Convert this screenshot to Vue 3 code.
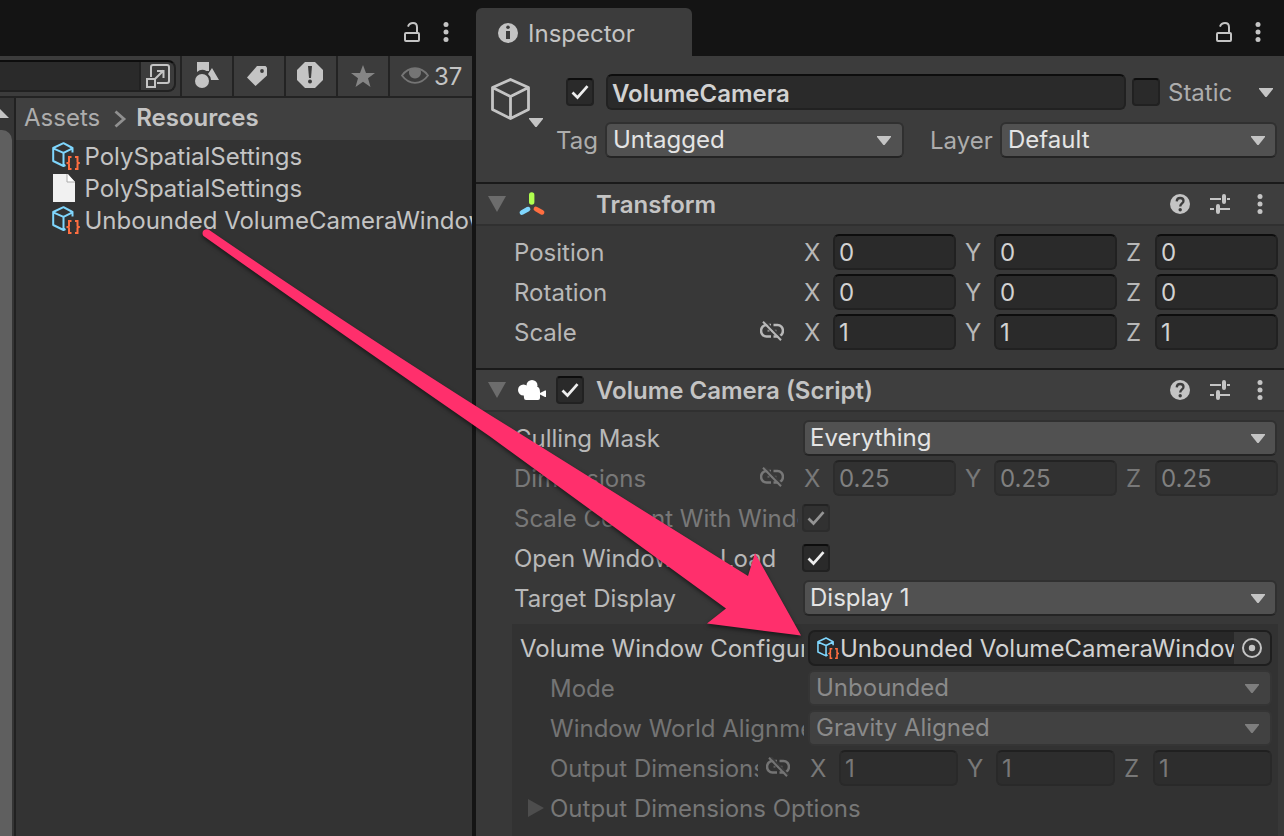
<template>
  <div class="editor">
    <!-- shared icons -->
    <svg class="sprite" width="0" height="0">
      <symbol id="i-lock" viewBox="0 0 16 20">
        <rect x="1" y="11" width="14" height="8" rx="1" fill="none" stroke="currentColor" stroke-width="2" />
        <path d="M4 4.600C5 2 7 1.100 9 1.100c2.600 0 4 1.700 4 4.200V11" fill="none" stroke="currentColor" stroke-width="2" />
      </symbol>
      <symbol id="i-dots" viewBox="0 0 6 20">
        <circle cx="3" cy="2.600" r="2.500" fill="currentColor" />
        <circle cx="3" cy="10" r="2.500" fill="currentColor" />
        <circle cx="3" cy="17.400" r="2.500" fill="currentColor" />
      </symbol>
      <symbol id="i-down" viewBox="0 0 14 9">
        <path d="M0 0h14v1L7.600 9H6.400L0 1z" fill="currentColor" />
      </symbol>
      <symbol id="i-check" viewBox="0 0 18 15">
        <path d="M1.500 7.500l5 5L16.500 1.200" fill="none" stroke="currentColor" stroke-width="2.700" />
      </symbol>
      <symbol id="i-unlink" viewBox="0 0 24 20">
        <path d="M11 4H6.500a5.400 5.700 0 0 0 0 11.500H11M13.500 4h4a5.400 5.700 0 0 1 0 11.500h-4" fill="none" stroke="currentColor" stroke-width="2.500" />
        <path d="M7.500 9.800h9" stroke="currentColor" stroke-width="2" stroke-dasharray="2 1.500" opacity=".65" />
        <path d="M4.600-.4L22.400 18" class="cut" stroke-width="1.800" />
        <path d="M3 .8L21 19.200" stroke="currentColor" stroke-width="2" />
      </symbol>
      <symbol id="i-help" viewBox="0 0 20 20">
        <circle cx="10" cy="10" r="10" fill="currentColor" />
        <path d="M6.700 7.300C6.900 5 8.300 4 10.100 4c2 0 3.400 1.100 3.400 2.900 0 2.400-3.300 2.600-3.300 5.500" class="cut" fill="none" stroke-width="2.300" />
        <circle cx="10.200" cy="15.700" r="1.700" class="hole" />
      </symbol>
      <symbol id="i-preset" viewBox="0 0 20 20">
        <path d="M0 5h11M17 5h3M0 15h4M10 15h10" stroke="currentColor" stroke-width="2" />
        <path d="M14 2v6M8 12v6" stroke="currentColor" stroke-width="4" stroke-linecap="round" />
      </symbol>
      <symbol id="i-asset" viewBox="0 0 28 28">
        <path d="M20.500 10.500V6L11.500 1.200 1.200 6v13l10.300 5 2-1M1.200 6.300l10.300 4.500 9-4.500M11.500 10.800V23.500" fill="none" stroke="#7fd6fd" stroke-width="2" stroke-linejoin="round" />
        <path d="M19.500 15H17v5l-1.500 1L17 22v5h2.500M23 15h2.500v5l1.500 1-1.500 1v5H23" fill="none" stroke="#ff6e40" stroke-width="2" />
      </symbol>
      <symbol id="i-fold" viewBox="0 0 18 16">
        <path d="M0 0h18L9 16z" fill="currentColor" />
      </symbol>
    </svg>

    <section class="project">
      <div class="topbar">
        <svg class="lock"><use href="#i-lock" /></svg>
        <svg class="dots"><use href="#i-dots" /></svg>
      </div>
      <div class="toolbar">
        <div class="search">
          <div class="search-input"></div>
          <div class="search-open">
            <svg width="24" height="24" viewBox="0 0 24 24" fill="none" stroke="currentColor" stroke-width="2">
              <path d="M5 13V3q0-2 2-2h14q2 0 2 2v14q0 2-2 2H11" />
              <rect x="1" y="15" width="8" height="8" />
              <path d="M9 15l8.500-8.500M11 7h6.500v7" />
            </svg>
          </div>
        </div>
        <div class="tool">
          <svg width="26" height="28" viewBox="0 0 26 28" fill="currentColor">
            <path d="M3 1h12v9H12.500A8 8 0 0 0 3 11z" />
            <circle cx="8" cy="20" r="7" />
            <path d="M18 7l7 12h-8q-.5-4-3-6z" />
          </svg>
        </div>
        <div class="tool tag-tool">
          <svg width="20" height="20" viewBox="0 0 20 20">
            <path d="M10 0h8.500L20 1.500V9.500L8.500 20 0 11.500z" fill="currentColor" />
            <circle cx="15" cy="5" r="1.900" class="hole" />
          </svg>
        </div>
        <div class="tool alert">
          <svg width="26" height="26" viewBox="0 0 26 26">
            <path d="M8 0h10l8 8v10l-8 8H8l-8-8V8z" fill="currentColor" />
            <path d="M11 4h4l-1 12h-2z" class="hole" />
            <circle cx="13" cy="19.500" r="2" class="hole" />
          </svg>
        </div>
        <div class="tool dim">
          <svg width="24" height="22" viewBox="0 0 24 22">
            <path d="M12 0l3 8h9l-7 5.200L19.500 22 12 16.700 4.500 22 7 13.200 0 8h9z" fill="currentColor" />
          </svg>
        </div>
        <div class="tool hidden-count">
          <svg width="28" height="18" viewBox="0 0 28 18">
            <path d="M1 8.500C8-1.200 20-1.200 27 8.500 20 18.200 8 18.200 1 8.500z" fill="none" stroke="currentColor" stroke-width="1.800" />
            <path d="M8.500 3Q14-.5 19.500 3a6 6 0 1 1-11 0z" fill="currentColor" />
          </svg>
          <span>37</span>
        </div>
      </div>
      <div class="browser">
        <div class="scroll">
          <svg width="18" height="9" viewBox="0 0 18 9"><path d="M9 0l9 9H0z" fill="currentColor" /></svg>
          <div class="thumb"></div>
        </div>
        <div class="files">
          <div class="crumbs">
            <span>Assets</span>
            <svg width="13" height="18" viewBox="0 0 13 18"><path d="M1.500 1.500L10 9l-8.500 7.500" fill="none" stroke="currentColor" stroke-width="2.800" /></svg>
            <b>Resources</b>
          </div>
          <div v-for="(file, i) in files" :key="i" class="file">
            <svg v-if="file.asset" class="asset"><use href="#i-asset" /></svg>
            <svg v-else class="page" viewBox="0 0 22 28">
              <path d="M0 0h15l7 8v20H0z" fill="#f1f1f1" />
              <path d="M14 0v8h8z" fill="#fff" />
              <path d="M14 0v8h8" fill="none" stroke="#aaa" />
            </svg>
            <span>{{ file.name }}</span>
          </div>
        </div>
      </div>
    </section>

    <section class="inspector">
      <div class="topbar">
        <div class="tab">
          <svg width="20" height="20" viewBox="0 0 20 20">
            <circle cx="10" cy="10" r="10" fill="currentColor" />
            <circle cx="10" cy="4.300" r="1.800" class="hole" />
            <path d="M8 8h4v8H8z" class="hole" />
          </svg>
          <span>Inspector</span>
        </div>
        <svg class="lock"><use href="#i-lock" /></svg>
        <svg class="dots"><use href="#i-dots" /></svg>
      </div>

      <div class="object">
        <div class="object-icon">
          <svg width="40" height="42" viewBox="0 0 40 42" fill="none" stroke="currentColor" stroke-width="2.800" stroke-linejoin="round">
            <path d="M19.500 1.500l18 8v22l-18 9-18-9v-22zM1.500 9.500l18 9 18-9M19.500 18.500v22" />
          </svg>
          <svg class="down"><use href="#i-down" /></svg>
        </div>
        <div class="object-fields">
          <div class="line">
            <div class="check"><svg><use href="#i-check" /></svg></div>
            <div class="input name">VolumeCamera</div>
            <div class="check"></div>
            <span class="static">Static</span>
            <svg class="down"><use href="#i-down" /></svg>
          </div>
          <div class="line second">
            <span class="tag">Tag</span>
            <div class="select tag-select"><span>Untagged</span><svg class="down"><use href="#i-down" /></svg></div>
            <span class="layer">Layer</span>
            <div class="select"><span>Default</span><svg class="down"><use href="#i-down" /></svg></div>
          </div>
        </div>
      </div>

      <div class="component-head">
        <svg class="fold"><use href="#i-fold" /></svg>
        <div class="component-icon">
          <svg width="26" height="24" viewBox="0 0 26 24" fill="none" stroke-linecap="round">
            <path d="M13.700 3v7" stroke="#b0ff4f" stroke-width="5.400" />
            <path d="M4 20.500l6-3.300" stroke="#7fd6fd" stroke-width="4.800" />
            <path d="M18 17l6 3.300" stroke="#ff6e40" stroke-width="4.800" />
          </svg>
        </div>
        <b>Transform</b>
        <svg class="help"><use href="#i-help" /></svg>
        <svg class="help"><use href="#i-preset" /></svg>
        <svg class="dots"><use href="#i-dots" /></svg>
      </div>
      <div class="component-body transform">
        <div v-for="row in transform" :key="row.label" class="row">
          <div class="label"><span>{{ row.label }}</span><svg v-if="row.link" class="unlink"><use href="#i-unlink" /></svg></div>
          <div class="vector">
            <label v-for="axis in axes" :key="axis"><span>{{ axis }}</span><div class="input">{{ row.value }}</div></label>
          </div>
        </div>
      </div>

      <div class="component-head">
        <svg class="fold"><use href="#i-fold" /></svg>
        <div class="component-icon">
          <svg width="28" height="20" viewBox="0 0 28 20" fill="#fff">
            <circle cx="5.500" cy="10" r="5.500" />
            <circle cx="14" cy="5.500" r="5.500" />
            <path d="M5 7h12q5-1 5 5v1l5-2.500h1V17h-1l-5-2.500V18q0 2-2 2H8q-2 0-2-2z" />
          </svg>
        </div>
        <div class="check"><svg><use href="#i-check" /></svg></div>
        <b>Volume Camera (Script)</b>
        <svg class="help"><use href="#i-help" /></svg>
        <svg class="help"><use href="#i-preset" /></svg>
        <svg class="dots"><use href="#i-dots" /></svg>
      </div>
      <div class="component-body camera">
        <div class="row">
          <div class="label"><span>Culling Mask</span></div>
          <div class="select"><span>Everything</span><svg class="down"><use href="#i-down" /></svg></div>
        </div>
        <div class="row off">
          <div class="label"><span>Dimensions</span><svg class="unlink"><use href="#i-unlink" /></svg></div>
          <div class="vector">
            <label v-for="axis in axes" :key="axis"><span>{{ axis }}</span><div class="input">0.25</div></label>
          </div>
        </div>
        <div class="row off">
          <div class="label narrow"><span>Scale Content With Window</span></div>
          <div class="check"><svg><use href="#i-check" /></svg></div>
        </div>
        <div class="row">
          <div class="label"><span>Open Window On Load</span></div>
          <div class="check"><svg><use href="#i-check" /></svg></div>
        </div>
        <div class="row">
          <div class="label"><span>Target Display</span></div>
          <div class="select"><span>Display 1</span><svg class="down"><use href="#i-down" /></svg></div>
        </div>

        <div class="config">
          <div class="row">
            <div class="label top"><span>Volume Window Configuration</span></div>
            <div class="object-field">
              <svg class="asset"><use href="#i-asset" /></svg>
              <span>Unbounded VolumeCameraWindowConfiguration</span>
              <div class="picker">
                <svg width="20" height="20" viewBox="0 0 20 20">
                  <circle cx="10" cy="10" r="9" fill="none" stroke="currentColor" stroke-width="2" />
                  <circle cx="10" cy="10" r="3.200" fill="currentColor" />
                </svg>
              </div>
            </div>
          </div>
          <div v-for="row in modes" :key="row.label" class="row off">
            <div class="label"><span>{{ row.label }}</span></div>
            <div class="select"><span>{{ row.value }}</span><svg class="down"><use href="#i-down" /></svg></div>
          </div>
          <div class="row off">
            <div class="label linked"><span>Output Dimensions</span><svg class="unlink"><use href="#i-unlink" /></svg></div>
            <div class="vector">
              <label v-for="axis in axes" :key="axis"><span>{{ axis }}</span><div class="input">1</div></label>
            </div>
          </div>
          <div class="row off options">
            <svg width="16" height="18" viewBox="0 0 16 18"><path d="M0 0l16 9-16 9z" fill="currentColor" /></svg>
            <span>Output Dimensions Options</span>
          </div>
        </div>
      </div>
    </section>

    <!-- drag arrow from the asset to its slot -->
    <svg class="arrow" width="1284" height="836" viewBox="0 0 1284 836">
      <path d="M208.500 229.500Q355 330 490 415L748 576 755 553 801 635.500 707 623.500 726 608.500 490 436.500Q350 340 203.500 236Q201.500 233 203.500 230.500Q206 228.500 208.500 229.500z" fill="#ff2f6c" />
    </svg>
  </div>
</template>

<script setup>
import { ref } from "vue";

const axes = ["X", "Y", "Z"];

const files = ref([
  { name: "PolySpatialSettings", asset: true },
  { name: "PolySpatialSettings", asset: false },
  { name: "Unbounded VolumeCameraWindowConfiguration", asset: true },
]);

const transform = ref([
  { label: "Position", value: 0 },
  { label: "Rotation", value: 0 },
  { label: "Scale", value: 1, link: true },
]);

const modes = ref([
  { label: "Mode", value: "Unbounded" },
  { label: "Window World Alignment", value: "Gravity Aligned" },
]);
</script>

<style>
body {
  margin: 0;
  background: #141414;
}
</style>

<style scoped>
* {
  box-sizing: border-box;
}

.editor {
  position: relative;
  display: flex;
  gap: 4px;
  width: 1284px;
  height: 836px;
  overflow: hidden;
  background: #141414;
  color: #c4c4c4;
  font: 24px/30px Inter, "Liberation Sans", sans-serif;
  white-space: nowrap;
}

svg {
  display: block;
  flex: none;
  overflow: visible;
}

b {
  font-weight: 600;
}

.sprite,
.arrow {
  position: absolute;
  left: 0;
  top: 0;
}

.arrow {
  filter: drop-shadow(0 2px 2px rgb(0 0 0 / 55%));
}

.cut {
  stroke: #3c3c3c;
}

.hole {
  fill: #3c3c3c;
}

.lock {
  width: 16px;
  height: 20px;
  margin-left: auto;
}

.dots {
  width: 6px;
  height: 20px;
  margin-left: 23px;
}

.down {
  width: 14px;
  height: 9px;
}

.topbar {
  display: flex;
  flex: none;
  align-items: center;
  height: 56px;
  padding-top: 8px;
}

/* project window */
.project {
  display: flex;
  flex-direction: column;
  width: 472px;
  overflow: hidden;
}

.project .topbar {
  padding-right: 23px;
}

.toolbar {
  display: flex;
  flex: none;
  height: 42px;
  background: #3c3c3c;
  border-bottom: 2px solid #232323;
}

.search {
  display: flex;
  width: 176px;
  height: 32px;
  margin: 4px 4px 0 0;
  border: 2px solid #212121;
  border-top-color: #0d0d0d;
  border-left: 0;
  border-radius: 0 8px 8px 0;
}

.search-input {
  width: 141px;
  background: #2a2a2a;
  border-right: 2px solid #212121;
}

.search-open {
  flex: 1;
  padding: 2px 0 0 5px;
}

.tool {
  display: flex;
  align-items: center;
  justify-content: center;
  width: 52px;
  padding-bottom: 2px;
  border-left: 2px solid #232323;
}

.tool.tag-tool {
  padding: 0 4px 0 0;
}

.tool.alert {
  padding-right: 2px;
}

.tool.dim {
  padding-bottom: 1px;
  color: #858585;
}

.tool.hidden-count {
  flex: 1;
  justify-content: flex-start;
  gap: 5px;
  padding-left: 11px;
  padding-bottom: 0;
}

.hidden-count svg {
  color: #757575;
}

.hidden-count span {
  padding-top: 2px;
}

.browser {
  display: flex;
  flex: 1;
  min-height: 0;
}

.scroll {
  flex: none;
  width: 16px;
  overflow: hidden;
  background: #353535;
  border-right: 2px solid #212121;
}

.scroll svg {
  margin: 11px 0 12px -9px;
}

.thumb {
  width: 12px;
  height: 720px;
  background: #5f5f5f;
  border-radius: 0 10px 0 0;
}

.files {
  flex: 1;
  overflow: hidden;
  background: #333;
}

.crumbs {
  display: flex;
  align-items: center;
  height: 42px;
  padding: 0 0 2px 8px;
  background: #404040;
  color: #adadad;
}

.crumbs svg {
  margin: 2px 9px 0 14px;
  color: #909090;
}

.crumbs b {
  color: #c4c4c4;
}

.file {
  display: flex;
  align-items: center;
  height: 32px;
  padding-left: 36px;
}

.file span {
  padding: 2px 0 0 0.5px;
}

.asset {
  width: 28px;
  height: 28px;
  margin-right: 4px;
}

.page {
  width: 22px;
  height: 28px;
  margin: 0 9px 0 1px;
}

/* inspector */
.inspector {
  display: flex;
  flex-direction: column;
  width: 808px;
  background: #383838;
}

.inspector .topbar {
  padding-right: 23px;
  background: #141414;
}

.tab {
  display: flex;
  align-items: center;
  gap: 10px;
  width: 216px;
  height: 48px;
  padding: 2px 0 0 22px;
  background: #3c3c3c;
  border-radius: 6px 6px 0 0;
}

.tab span {
  padding-top: 1px;
}

.input {
  height: 36px;
  padding-left: 5px;
  overflow: hidden;
  background: #2a2a2a;
  border: 2px solid #212121;
  border-top-color: #0d0d0d;
  border-radius: 6px;
  color: #d2d2d2;
  line-height: 34px;
}

.select {
  display: flex;
  align-items: center;
  flex: 1;
  height: 36px;
  padding: 0 10px 0 6px;
  background: #515151;
  border: 2px solid #303030;
  border-bottom-color: #242424;
  border-radius: 6px;
  color: #e4e4e4;
}

.select span {
  flex: 1;
}

.select .down {
  color: #c4c4c4;
}

.check {
  display: flex;
  flex: none;
  align-items: center;
  justify-content: center;
  width: 28px;
  height: 28px;
  background: #2a2a2a;
  border: 2px solid #212121;
  border-top-color: #0d0d0d;
  border-radius: 4px;
  color: #eee;
}

.check svg {
  width: 18px;
  height: 15px;
}

.object {
  display: flex;
  flex: none;
  height: 126px;
  padding: 18px 7px 0 15px;
  background: #3c3c3c;
}

.object-icon {
  width: 52px;
  margin: 4px 0 0 0;
}

.object-icon .down {
  margin: -2px 0 0 38px;
}

.object-fields {
  flex: 1;
}

.line {
  display: flex;
  align-items: center;
  height: 36px;
  padding-left: 23px;
}

.line.second {
  margin-top: 12px;
  padding-left: 14px;
  color: #adadad;
}

.name {
  width: 520px;
  margin: 0 6px 0 12px;
  padding-left: 4px;
  font-weight: 600;
  line-height: 35px;
}

.static {
  flex: 1;
  padding: 2px 0 0 8px;
  color: #adadad;
}

.static + .down {
  margin: 0 4px 0 0;
}

.tag {
  width: 49px;
  padding-top: 2px;
  margin-left: -1px;
}

.tag-select {
  flex: none;
  width: 299px;
  padding-right: 11px;
}

.layer {
  width: 96px;
  padding: 2px 0 0 26px;
}

.component-head {
  display: flex;
  flex: none;
  align-items: center;
  height: 44px;
  padding: 0 21px 0 12px;
  background: #3e3e3e;
  border-top: 2px solid #1a1a1a;
  border-bottom: 2px solid #303030;
}

.fold {
  width: 18px;
  height: 16px;
  color: #6c6c6c;
}

.component-icon {
  width: 50px;
  padding-left: 12px;
}

.component-head .check + b {
  margin-left: 12px;
}

.component-head b {
  flex: 1;
  padding-top: 2px;
}

.component-icon + b {
  margin-left: 40px;
}

.help {
  width: 20px;
  height: 20px;
  margin-left: 20px;
}

.component-head .dots {
  margin-left: 27px;
}

.component-body {
  display: flex;
  flex: none;
  flex-direction: column;
  gap: 4px;
  padding: 8px 6px 18px 38px;
}

.row {
  display: flex;
  align-items: center;
  height: 36px;
}

.label {
  display: flex;
  flex: none;
  align-items: center;
  width: 290px;
  overflow: hidden;
  color: #b8b8b8;
}

.label span {
  flex: 1;
  overflow: hidden;
  padding-top: 2px;
}

.unlink {
  width: 24px;
  height: 20px;
  margin: -3px 20px 0 0;
}

.vector {
  display: grid;
  flex: 1;
  grid-template-columns: repeat(3, 1fr);
  gap: 9px;
}

.vector label {
  display: flex;
  align-items: center;
}

.vector label > span {
  width: 29px;
  padding-top: 2px;
  color: #b8b8b8;
}

.vector .input {
  flex: 1;
  padding-left: 4px;
}

.camera {
  flex: 1;
  padding: 8px 6px 0 38px;
}

.camera > .row > .check {
  margin-left: -2px;
}

.camera > .row > .select {
  margin-left: -1px;
  margin-right: 1px;
  padding-left: 5px;
}

.label.narrow {
  width: 284px;
}

.camera > .row > .label.narrow + .check {
  margin-left: 4px;
}

.off {
  color: #777;
}

.off .label,
.off .vector label > span {
  color: #787878;
}

.off .input {
  background: #313131;
  border-color: #2c2c2c;
  border-top-color: #232323;
  color: #808080;
}

.off .check {
  background: #313131;
  border-color: #2c2c2c;
  border-top-color: #232323;
  color: #949494;
}

.config {
  display: flex;
  flex: 1;
  flex-direction: column;
  gap: 4px;
  margin: 4px 0 0 -2px;
  padding: 6px 6px 0 38px;
  background: #323232;
}

.config .label {
  width: 254px;
  margin-right: 4px;
}

.config .label.top {
  width: 284px;
  margin-left: -30px;
  color: #c4c4c4;
}

.config .off .label {
  color: #747474;
}

.config .label.linked {
  width: 240px;
  margin-right: 20px;
}

.linked .unlink {
  margin: -3px 0 0 8px;
}

.config .off .input {
  background: #2d2d2d;
  border-color: #292929;
  border-top-color: #202020;
  color: #787878;
}

.off .select {
  padding-right: 11px;
  background: #414141;
  border-color: #353535;
  color: #8a8a8a;
}

.off .select .down {
  color: #7e7e7e;
}

.object-field {
  display: flex;
  flex: 1;
  align-items: center;
  height: 36px;
  padding-left: 7px;
  overflow: hidden;
  background: #282828;
  border: 2px solid #1e1e1e;
  border-radius: 7px;
  color: #d2d2d2;
}

.object-field .asset {
  width: 22px;
  height: 22px;
  margin-right: 1px;
}

.object-field span {
  flex: 1;
  overflow: hidden;
  padding-top: 2px;
}

.picker {
  display: flex;
  align-items: center;
  justify-content: center;
  width: 36px;
  height: 32px;
  background: #373737;
  color: #c4c4c4;
}

.options {
  gap: 6px;
  margin-left: -22px;
}

.options span {
  padding-top: 2px;
}

.options svg {
  color: #4d4d4d;
}
</style>
